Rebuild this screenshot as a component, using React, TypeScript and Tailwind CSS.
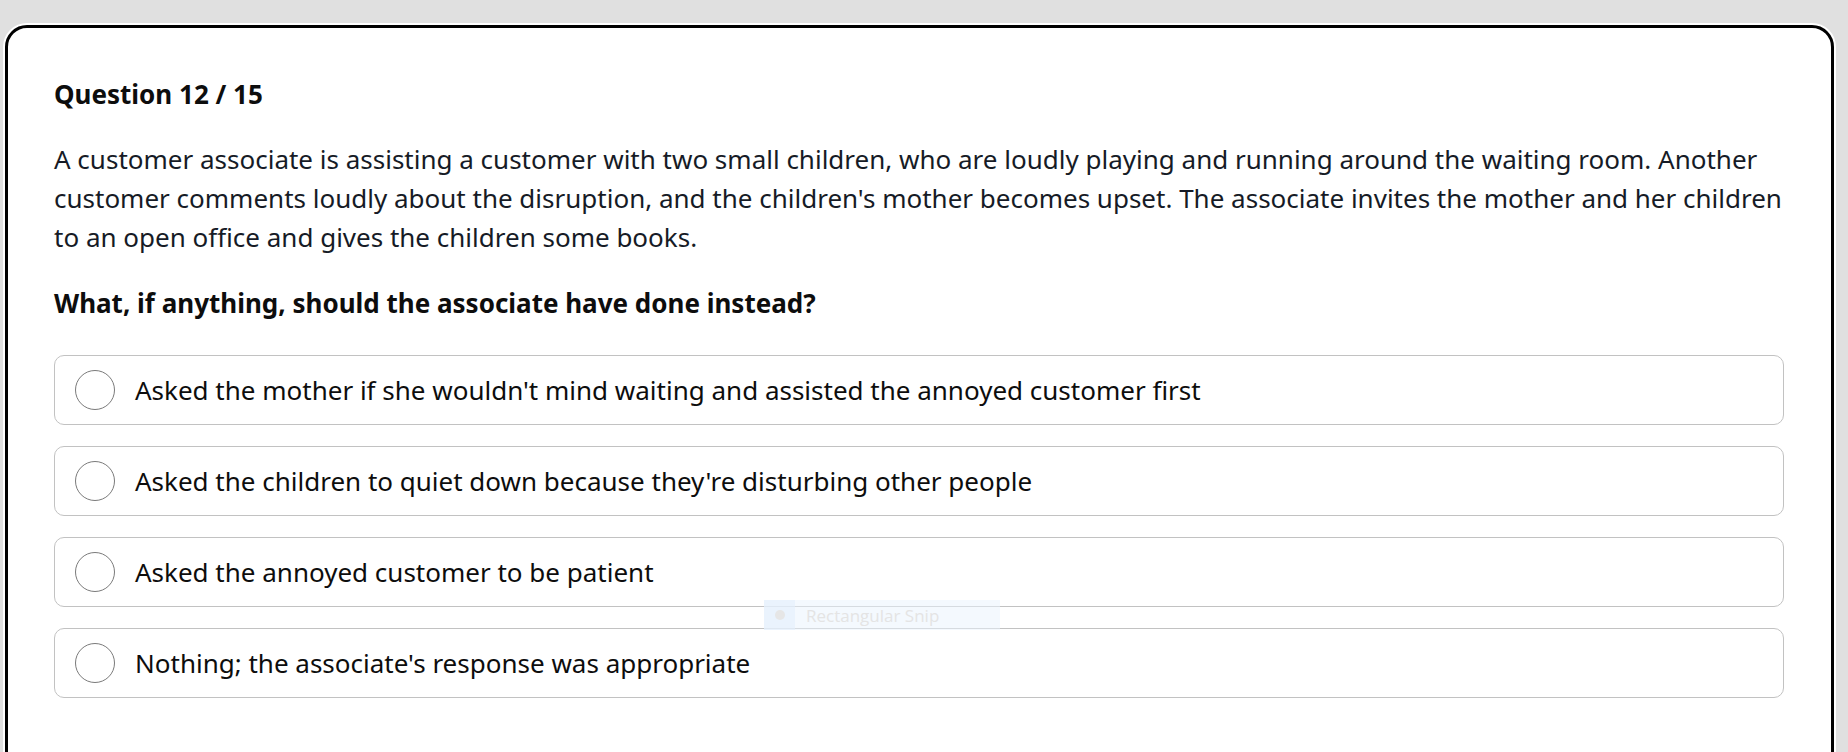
const OPTIONS = [
  "Asked the mother if she wouldn't mind waiting and assisted the annoyed customer first",
  "Asked the children to quiet down because they're disturbing other people",
  "Asked the annoyed customer to be patient",
  "Nothing; the associate's response was appropriate",
];

export default function App() {
  return (
    <div
      className="relative h-[752px] w-[1848px] overflow-hidden bg-[#e0e0e0] pl-[5px] pr-[14px] pt-[25px]"
      style={{ fontFamily: '"Noto Sans", "Open Sans", sans-serif' }}
    >
      <div className="h-[760px] rounded-[22px] border-[3px] border-black bg-white px-[46px] pt-[50px] shadow-[0_0_0_2px_#ffffff]">
        <h1 className="text-[26px] font-bold leading-[32px] text-[#0d0d0d]">Question 12 / 15</h1>

        <p className="mt-[30px] text-[26px] leading-[39px] text-[#161b26]">
          A customer associate is assisting a customer with two small children, who are loudly playing and running
          around the waiting room. Another customer comments loudly about the disruption, and the children's mother
          becomes upset. The associate invites the mother and her children to an open office and gives the children
          some books.
        </p>

        <h2 className="mt-[27px] text-[26px] font-bold leading-[39px] text-[#0d0d0d]">
          What, if anything, should the associate have done instead?
        </h2>

        <ul className="mt-[32px] flex w-[1730px] flex-col gap-[21px]">
          {OPTIONS.map((o) => (
            <li
              key={o}
              className="flex h-[70px] items-center gap-[20px] rounded-[10px] border border-[#c2c2c2] bg-white pl-[20px]"
            >
              <span className="h-[40px] w-[40px] shrink-0 rounded-full border-[1.5px] border-[#7a7a7a]" />
              <span className="text-[26px] leading-[39px] text-[#0d0d0d]">{o}</span>
            </li>
          ))}
        </ul>
      </div>

      {/* snipping tool toast left over in the capture */}
      <div
        className="absolute left-[764px] top-[600px] flex h-[30px] w-[236px] items-center bg-[#eaf3fd]/50"
        style={{ fontFamily: '"Open Sans", "Noto Sans", sans-serif' }}
      >
        <div className="flex h-full w-[31px] items-center justify-center bg-[#e3effc]/60">
          <span className="h-[10px] w-[10px] rounded-full bg-[#e6e6e6]" />
        </div>
        <span className="ml-[11px] text-[17px] leading-none text-[#e4e4e4]">Rectangular Snip</span>
      </div>
    </div>
  );
}
